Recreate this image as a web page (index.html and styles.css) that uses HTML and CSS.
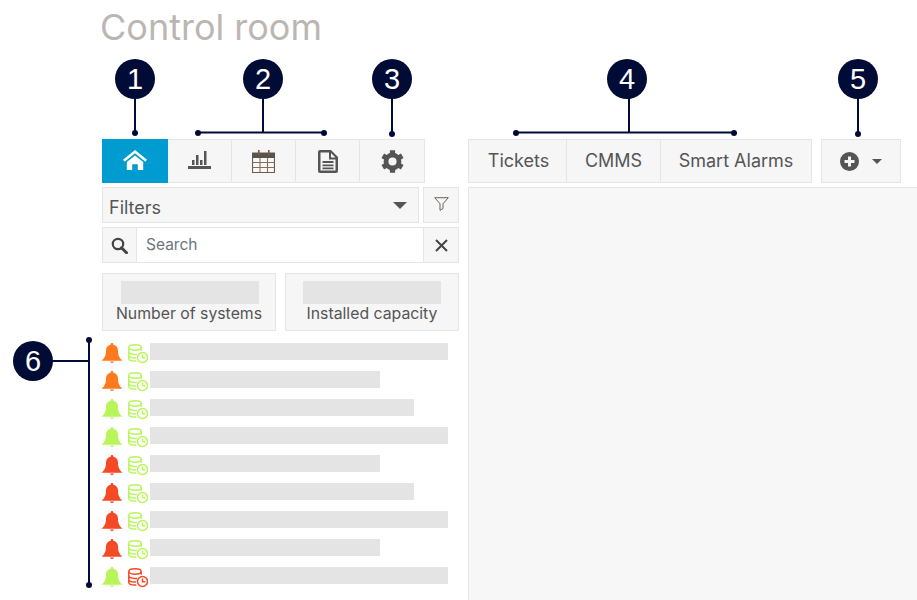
FILE: index.html
```html
<!DOCTYPE html>
<html lang="en">
<head>
<meta charset="utf-8">
<title>Control room</title>
<link rel="stylesheet" href="styles.css">
</head>
<body>
<svg class="defs" width="0" height="0">
  <symbol id="bell" viewBox="0 0 20 20">
    <path d="M10 0c-1 0-1.400.7-1.400 1.700C5.600 2.400 4 4.700 4 7.500c0 4.500-1 6.800-3.200 9-.4.400-.8.700-.8 1.200h20c0-.5-.4-.8-.8-1.200-2.200-2.200-3.200-4.500-3.200-9 0-2.800-1.600-5.100-4.600-5.800C11.400.7 11 0 10 0zM8 18.500c0 .9.900 1.500 2 1.500s2-.6 2-1.500z"/>
  </symbol>
  <symbol id="dbclock" viewBox="0 0 20 20">
    <g fill="none" stroke="currentColor" stroke-width="1.500">
      <ellipse cx="7" cy="3.500" rx="6.200" ry="2.700"/>
      <path d="M.8 3.500v10.700c0 1.600 2.700 2.800 6.200 2.800h1.300M13.200 3.500v3.300M.8 7.600c0 1.600 2.700 2.800 6.200 2.800.8 0 1.500-.1 2-.2M.8 11.200c0 1.600 2.700 2.800 6.200 2.800h1"/>
      <circle cx="14.500" cy="13.500" r="5"/>
      <path d="M14.500 10.500v3.200h2.800"/>
    </g>
  </symbol>
</svg>

<main class="page">
  <h1 class="title">Control room</h1>
  <div class="columns">
    <section class="left">
      <nav class="tabs">
        <button class="tab tab-home active">
          <svg class="ico" width="24" height="20" viewBox="0 0 24 20"><path d="M12 0 0 9.800l1.600 1.900L12 3.200l10.400 8.500 1.600-1.900z"/><path d="M12 5.400 3.800 12v8h5.400v-5.800h5.600V20h5.400v-8z"/></svg>
        </button>
        <button class="tab tab-chart">
          <svg class="ico" width="23" height="18" viewBox="0 0 23 18"><path d="M0 15h23v3H0zM4 9h2.500v5H4zM8 4h2.500v10H8zM12 9h2.500v5H12zM16 0h2.500v14H16z"/></svg>
        </button>
        <button class="tab">
          <svg width="23" height="23" viewBox="0 0 23 23"><path d="M.5 3h22v19.500H.5z" fill="#fff" fill-opacity=".25" stroke="#6b5c4e" stroke-width="1.200"/><path d="M0 3h23v5H0z" fill="#5a534c"/><path d="M6 0h1.600v5H6zM16 0h1.600v5H16z" fill="#6b5c4e"/><path d="M.5 12.500h22M.5 17.500h22M8 8v14.500M15.500 8v14.500" stroke="#8a6f55" stroke-width="1.100" fill="none"/></svg>
        </button>
        <button class="tab">
          <svg class="ico" width="20" height="23" viewBox="0 0 20 23"><path fill-rule="evenodd" d="M2 0h11l7 7v14a2 2 0 0 1-2 2H2a2 2 0 0 1-2-2V2a2 2 0 0 1 2-2zm.5 2.500v18h15V9.500H11V2.500zM13 3v4.500h4.500z"/><path d="M4.500 11h11v2h-11zM4.500 14.500h11v1.700h-11zM4.500 17.500h11v1.700h-11z"/></svg>
        </button>
        <button class="tab">
          <svg width="23" height="23" viewBox="0 0 22 22"><circle cx="11" cy="11" r="6.200" fill="none" stroke="#555" stroke-width="4.600"/><path d="M11 .3V4M11 21.700V18M20.300 5.600l-3.200 1.900M1.700 5.600l3.200 1.900M20.300 16.400l-3.200-1.900M1.700 16.400l3.200-1.900" stroke="#555" stroke-width="5" fill="none"/></svg>
        </button>
      </nav>

      <div class="filter-row">
        <div class="select">
          <span>Filters</span>
          <span class="caret"></span>
        </div>
        <button class="square">
          <svg width="15" height="14" viewBox="0 0 15 14"><path d="M.7.7h13.600L9 6.800v4.700l-3 1.800V6.800z" fill="none" stroke="#6b625a" stroke-width="1"/></svg>
        </button>
      </div>

      <div class="search-row">
        <span class="search-ico">
          <svg width="17" height="17" viewBox="0 0 17 17"><circle cx="7" cy="7" r="5.200" fill="none" stroke="#444" stroke-width="2.200"/><path d="m10.500 10.800 5 5" stroke="#444" stroke-width="3" stroke-linecap="round"/></svg>
        </span>
        <span class="search-input">Search</span>
        <button class="search-clear">
          <svg width="13" height="13" viewBox="0 0 13 13"><path d="m1 1 11 11M12 1 1 12" stroke="#444" stroke-width="2"/></svg>
        </button>
      </div>

      <div class="cards">
        <div class="card"><div class="ghost ghost-first"></div><div class="card-label">Number of systems</div></div>
        <div class="card"><div class="ghost"></div><div class="card-label">Installed capacity</div></div>
      </div>

      <ul class="list">
        <li class="row"><svg class="bell orange"><use href="#bell"/></svg><svg class="db green"><use href="#dbclock"/></svg><span class="bar w1"></span></li>
        <li class="row"><svg class="bell orange"><use href="#bell"/></svg><svg class="db green"><use href="#dbclock"/></svg><span class="bar w2"></span></li>
        <li class="row"><svg class="bell green"><use href="#bell"/></svg><svg class="db green"><use href="#dbclock"/></svg><span class="bar w3"></span></li>
        <li class="row"><svg class="bell green"><use href="#bell"/></svg><svg class="db green"><use href="#dbclock"/></svg><span class="bar w1"></span></li>
        <li class="row"><svg class="bell red"><use href="#bell"/></svg><svg class="db green"><use href="#dbclock"/></svg><span class="bar w2"></span></li>
        <li class="row"><svg class="bell red"><use href="#bell"/></svg><svg class="db green"><use href="#dbclock"/></svg><span class="bar w3"></span></li>
        <li class="row"><svg class="bell red"><use href="#bell"/></svg><svg class="db green"><use href="#dbclock"/></svg><span class="bar w1"></span></li>
        <li class="row"><svg class="bell red"><use href="#bell"/></svg><svg class="db green"><use href="#dbclock"/></svg><span class="bar w2"></span></li>
        <li class="row"><svg class="bell green"><use href="#bell"/></svg><svg class="db red"><use href="#dbclock"/></svg><span class="bar w1"></span></li>
      </ul>
    </section>

    <section class="right">
      <div class="right-top">
        <nav class="tabs text-tabs">
          <button class="ttab t1">Tickets</button>
          <button class="ttab t2">CMMS</button>
          <button class="ttab t3">Smart Alarms</button>
        </nav>
        <button class="add">
          <svg width="19" height="19" viewBox="0 0 19 19"><path fill-rule="evenodd" d="M9.500 0a9.500 9.500 0 1 1 0 19 9.500 9.500 0 0 1 0-19zM8 4.500v3.500H4.500v3H8v3.500h3V11h3.500V8H11V4.500z" fill="#555"/></svg>
          <span class="add-caret"></span>
        </button>
      </div>
      <div class="panel"></div>
    </section>
  </div>
</main>

<div class="callouts">
  <svg class="lines" width="917" height="600" viewBox="0 0 917 600">
    <g stroke="#000b36" stroke-width="2" fill="none">
      <path d="M135 79v54"/>
      <path d="M198 132.500h126M263 79v53"/>
      <path d="M392 79v54"/>
      <path d="M516 132.500h218M629 79v53"/>
      <path d="M858 79v55"/>
      <path d="M33 361h56M89 340v245"/>
    </g>
    <g fill="#000b36">
      <circle cx="135" cy="133" r="3"/>
      <circle cx="198" cy="133" r="3"/>
      <circle cx="324" cy="133" r="3"/>
      <circle cx="392" cy="134" r="3"/>
      <circle cx="516" cy="133" r="3"/>
      <circle cx="734" cy="133" r="3"/>
      <circle cx="858" cy="134" r="3"/>
      <circle cx="89" cy="340" r="3"/>
      <circle cx="89" cy="585" r="3"/>
    </g>
  </svg>
  <span class="num n1">1</span>
  <span class="num n2">2</span>
  <span class="num n3">3</span>
  <span class="num n4">4</span>
  <span class="num n5">5</span>
  <span class="num n6">6</span>
</div>
</body>
</html>
```

FILE: styles.css
```css
* { box-sizing: border-box; }
html, body { margin: 0; height: 100%; overflow: hidden; background: #fff; }
body { font-family: Inter, "Liberation Sans", sans-serif; color: #555; position: relative; }
.defs { position: absolute; }
button { font: inherit; color: inherit; margin: 0; cursor: pointer; }

.page { height: 600px; padding-left: 102px; display: flex; flex-direction: column; }
.title { margin: 0 0 0 -2px; height: 139px; padding-top: 6px; font-size: 36px; line-height: 42px; font-weight: 400; color: #bbb6b3; }
.columns { display: flex; flex: 1; min-height: 0; }

.left { width: 357px; flex: none; }
.tabs { display: flex; height: 44px; }
.tab { width: 64px; height: 44px; padding: 0; background: #f6f6f6; border: 1px solid #e5e5e5; border-left: 0; display: flex; align-items: center; justify-content: center; }
.tab-home { width: 66px; border: 0; padding-bottom: 3px; }
.tab-chart { padding-bottom: 2px; }
.tab:last-child { width: 65px; }
.active { background: #009bd1; }
.active .ico { fill: #fff; }
.ico { fill: #555; }

.filter-row { display: flex; gap: 4px; margin-top: 4px; height: 36px; }
.select { flex: 1; background: #f6f6f6; border: 1px solid #e5e5e5; display: flex; align-items: center; justify-content: space-between; padding: 5px 11px 0 6px; font-size: 18px; color: #555; }
.caret { width: 0; height: 0; border-left: 7px solid transparent; border-right: 7px solid transparent; border-top: 7px solid #555; margin-top: -5px; }
.square { width: 36px; padding: 0 0 2px; background: #f6f6f6; border: 1px solid #e5e5e5; display: flex; align-items: center; justify-content: center; }

.search-row { display: flex; margin-top: 4px; height: 36px; border: 1px solid #e5e5e5; }
.search-ico { width: 34px; background: #f6f6f6; border-right: 1px solid #e5e5e5; display: flex; align-items: center; justify-content: center; }
.search-input { flex: 1; padding-left: 9px; font-size: 15.500px; line-height: 33px; color: #6c757d; }
.search-clear { width: 35px; padding: 0; background: #f6f6f6; border: 0; border-left: 1px solid #e5e5e5; display: flex; align-items: center; justify-content: center; }

.cards { display: flex; gap: 9px; margin-top: 10px; height: 58px; }
.card { flex: 1; background: #f6f6f6; border: 1px solid #e5e5e5; padding-top: 7px; display: flex; flex-direction: column; align-items: center; }
.ghost { width: 138px; height: 23px; background: #e4e4e4; }
.ghost-first { margin-left: 2px; }
.card-label { font-size: 15.800px; line-height: 18px; margin-top: 1px; color: #555; }

.list { list-style: none; margin: 12px 0 0; padding: 0; }
.row { display: flex; align-items: flex-start; height: 28px; }
.bell { width: 20px; height: 20px; flex: none; fill: currentColor; }
.db { width: 20px; height: 20px; margin: 1px 0 0 6px; flex: none; }
.bar { height: 17px; background: #e4e4e4; margin-left: 2px; }
.w1 { width: 298px; }
.w2 { width: 230px; }
.w3 { width: 264px; }
.orange { color: #ff7a1f; }
.green { color: #b8f55c; }
.red { color: #f44a26; }

.right { flex: 1; margin-left: 9px; display: flex; flex-direction: column; }
.right-top { display: flex; gap: 9px; height: 44px; }
.ttab { height: 44px; padding: 0 0 2px; background: #f6f6f6; border: 1px solid #e5e5e5; border-left: 0; font-size: 18px; color: #555; }
.t1 { width: 99px; padding-left: 2px; border-left: 1px solid #e5e5e5; }
.t2 { width: 94px; }
.t3 { width: 151px; }
.add { width: 80px; height: 44px; padding: 0; background: #f6f6f6; border: 1px solid #e5e5e5; display: flex; align-items: center; justify-content: center; gap: 13px; }
.add-caret { width: 0; height: 0; border-left: 5px solid transparent; border-right: 5px solid transparent; border-top: 5px solid #555; }
.panel { flex: 1; margin-top: 4px; background: #f7f7f7; border: 1px solid #e5e5e5; border-right: 0; border-bottom: 0; }

.callouts { position: absolute; inset: 0; pointer-events: none; }
.lines { position: absolute; left: 0; top: 0; }
.num { position: absolute; width: 40px; height: 40px; margin: -20px 0 0 -20px; border-radius: 50%; background: #000b36; color: #fff; font-family: "Liberation Sans", Arial, sans-serif; font-size: 29px; line-height: 40px; text-align: center; }
.n1 { left: 135px; top: 79px; }
.n2 { left: 263px; top: 79px; }
.n3 { left: 392px; top: 79px; }
.n4 { left: 627px; top: 79px; }
.n5 { left: 858px; top: 79px; }
.n6 { left: 33px; top: 361px; }
```
